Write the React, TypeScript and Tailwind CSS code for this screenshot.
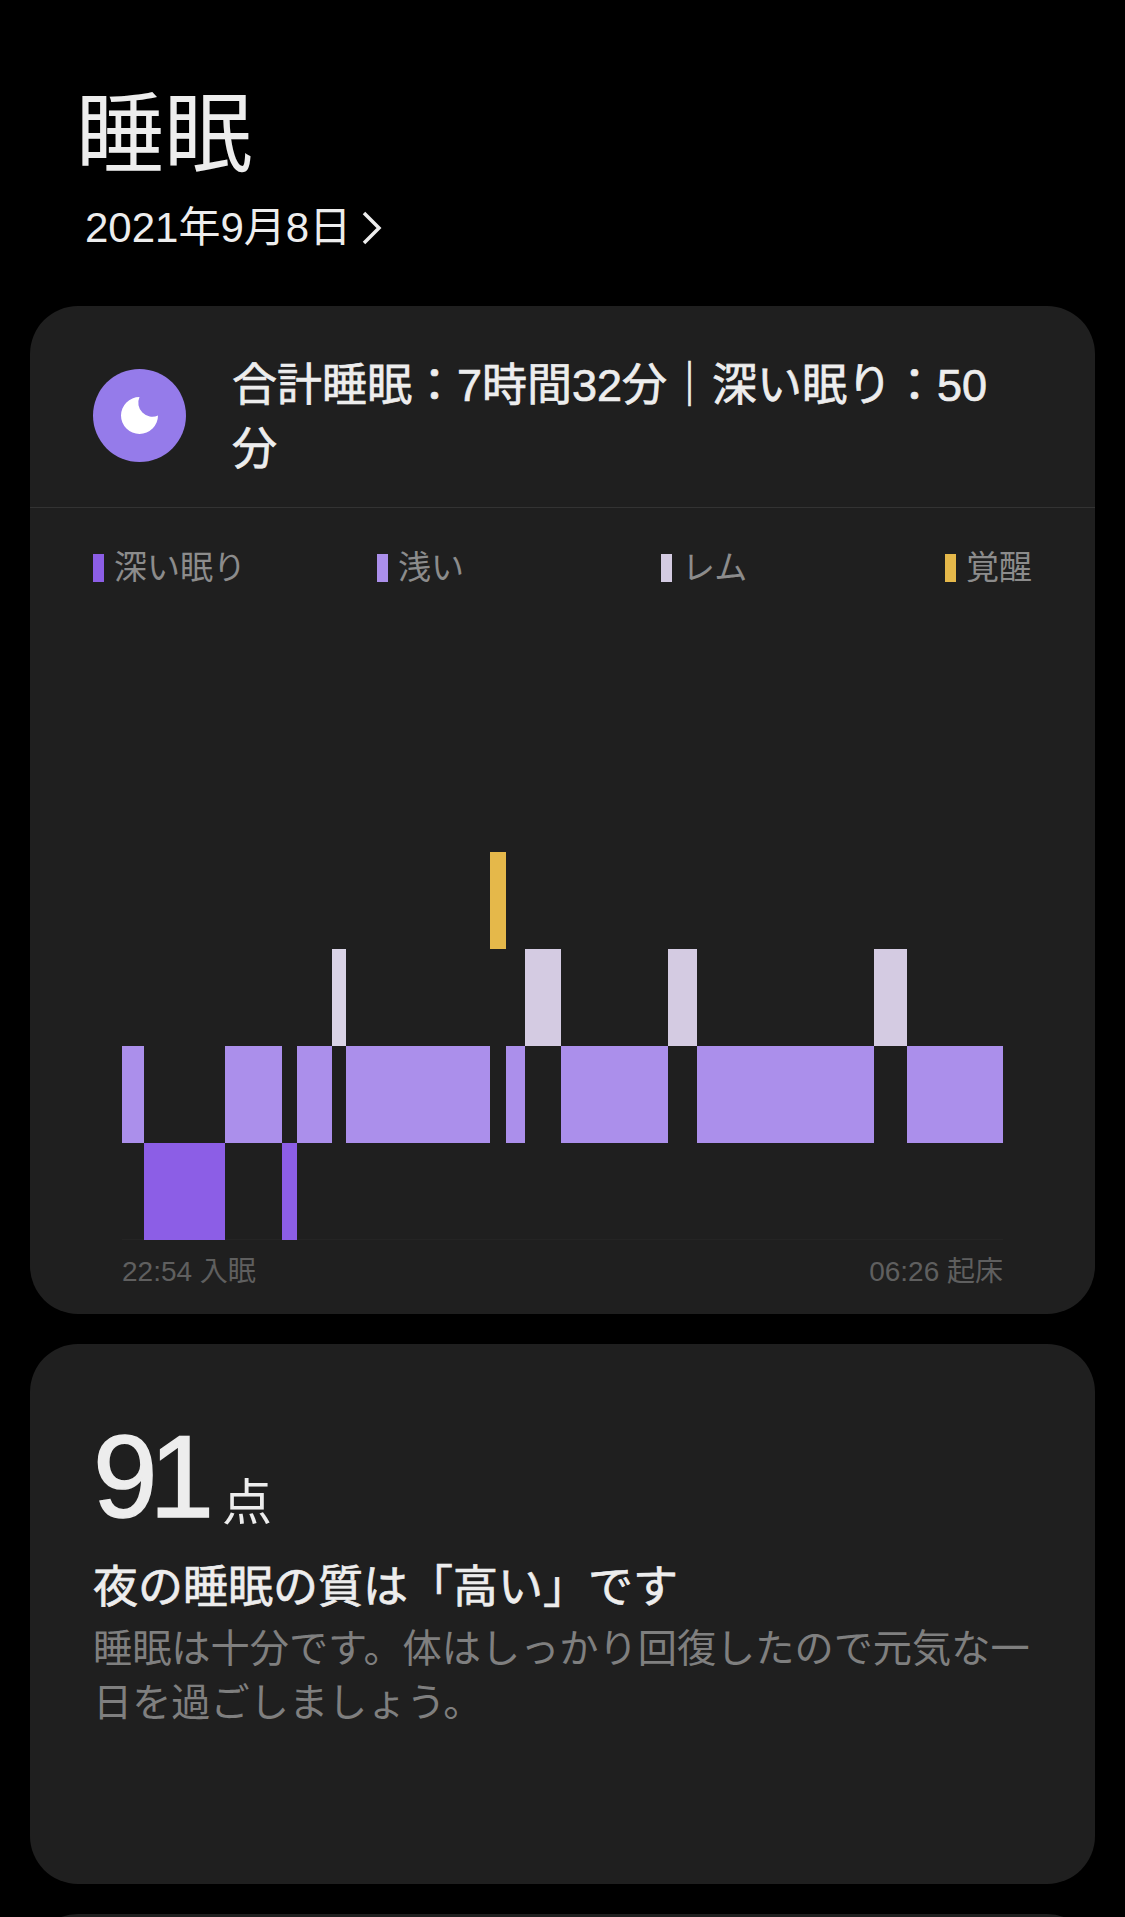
const segments = [
  { key: 1, width: "w-[22px]", level: "mt-[194px]", color: "bg-[#ab8feb]" },
  { key: 2, width: "w-[81px]", level: "mt-[291px]", color: "bg-[#8c5ee6]" },
  { key: 3, width: "w-[57px]", level: "mt-[194px]", color: "bg-[#ab8feb]" },
  { key: 4, width: "w-[15px]", level: "mt-[291px]", color: "bg-[#8c5ee6]" },
  { key: 5, width: "w-[35px]", level: "mt-[194px]", color: "bg-[#ab8feb]" },
  { key: 6, width: "w-[14px]", level: "mt-[97px]", color: "bg-[#d9d3e6]" },
  { key: 7, width: "w-[144px]", level: "mt-[194px]", color: "bg-[#ab8feb]" },
  { key: 8, width: "w-[16px]", level: "mt-0", color: "bg-[#e5b84a]" },
  { key: 9, width: "w-[19px]", level: "mt-[194px]", color: "bg-[#ab8feb]" },
  { key: 10, width: "w-[36px]", level: "mt-[97px]", color: "bg-[#d4cbe2]" },
  { key: 11, width: "w-[107px]", level: "mt-[194px]", color: "bg-[#ab8feb]" },
  { key: 12, width: "w-[29px]", level: "mt-[97px]", color: "bg-[#d4cbe2]" },
  { key: 13, width: "w-[177px]", level: "mt-[194px]", color: "bg-[#ab8feb]" },
  { key: 14, width: "w-[33px]", level: "mt-[97px]", color: "bg-[#d4cbe2]" },
  { key: 15, width: "w-[96px]", level: "mt-[194px]", color: "bg-[#ab8feb]" },
];

const legend = [
  { label: "深い眠り", color: "bg-[#8c5ee6]" },
  { label: "浅い", color: "bg-[#ab8feb]" },
  { label: "レム", color: "bg-[#d4cbe2]" },
  { label: "覚醒", color: "bg-[#e5b84a]" },
];

function Moon() {
  return (
    <svg width="37" height="37" viewBox="0 0 37 37">
      <path d="M18.5 0A18.5 18.5 0 1 0 37 18.5A14 14 0 0 1 18.5 0Z" fill="#ffffff" />
    </svg>
  );
}

export default function App() {
  return (
    <div className="w-[1125px] h-[1917px] overflow-hidden bg-black font-['Liberation_Sans','Noto_Sans_CJK_JP',sans-serif]">
      <div className="h-[306px] pl-[76px] pt-[78px]">
        <h1 className="text-[88px] leading-[114px] text-[#ededed]">睡眠</h1>
        <div className="mt-[8px] ml-[9px] flex items-center gap-[10px] text-[42px] leading-[56px] text-[#ededed]">
          <span>2021年9月8日</span>
          <svg width="22" height="34" viewBox="0 0 22 34" fill="none">
            <path d="M3 2l15 15-15 15" stroke="#ededed" strokeWidth="3.5" />
          </svg>
        </div>
      </div>

      <div className="mx-[30px] h-[1008px] rounded-[48px] bg-[#1f1f1f]">
        <div className="flex h-[202px] items-start border-b border-[#333333] pl-[63px] pr-[80px]">
          <div className="mt-[63px] flex h-[93px] w-[93px] shrink-0 items-center justify-center rounded-full bg-[#957bea]">
            <Moon />
          </div>
          <div className="ml-[46px] mt-[48px] text-[45px] leading-[64px] font-normal text-[#ededed] [-webkit-text-stroke:0.7px_#ededed]">
            合計睡眠：7時間32分｜深い眠り：50分
          </div>
        </div>

        <div className="mt-[38px] grid grid-cols-[284px_284px_284px_auto] pl-[63px]">
          {legend.map((item) => (
            <div key={item.label} className="flex items-center gap-[10px]">
              <div className={`h-[28px] w-[11px] ${item.color}`} />
              <span className="text-[33px] leading-[44px] text-[#8c8c8c]">{item.label}</span>
            </div>
          ))}
        </div>

        <div className="mt-[262px] ml-[92px] w-[881px]">
          <div className="flex h-[388px] border-b border-[#242424]">
            {segments.map((s) => (
              <div key={s.key} className={s.width}>
                <div className={`h-[97px] ${s.level} ${s.color}`} />
              </div>
            ))}
          </div>
          <div className="mt-[14px] flex justify-between text-[28px] leading-[36px] text-[#5f5f5f]">
            <span>22:54 入眠</span>
            <span>06:26 起床</span>
          </div>
        </div>
      </div>

      <div className="mx-[30px] mt-[30px] h-[540px] rounded-[48px] bg-[#1f1f1f] pl-[63px] pr-[60px] pt-[68px]">
        <div className="flex items-end">
          <span className="text-[116px] leading-[130px] tracking-[-8px] text-[#ededed] [-webkit-text-stroke:1.5px_#ededed]">91</span>
          <span className="mb-[9px] ml-[16px] text-[50px] leading-[60px] text-[#ededed]">点</span>
        </div>
        <div className="mt-[16px] text-[45px] leading-[60px] font-normal text-[#ededed] [-webkit-text-stroke:0.7px_#ededed]">夜の睡眠の質は「高い」です</div>
        <div className="mt-[4px] text-[39.2px] leading-[54px] text-[#7f7f7f]">
          睡眠は十分です。体はしっかり回復したので元気な一日を過ごしましょう。
        </div>
      </div>

      <div className="mx-[30px] mt-[30px] h-[100px] rounded-[48px] bg-[#1f1f1f]" />
    </div>
  );
}
